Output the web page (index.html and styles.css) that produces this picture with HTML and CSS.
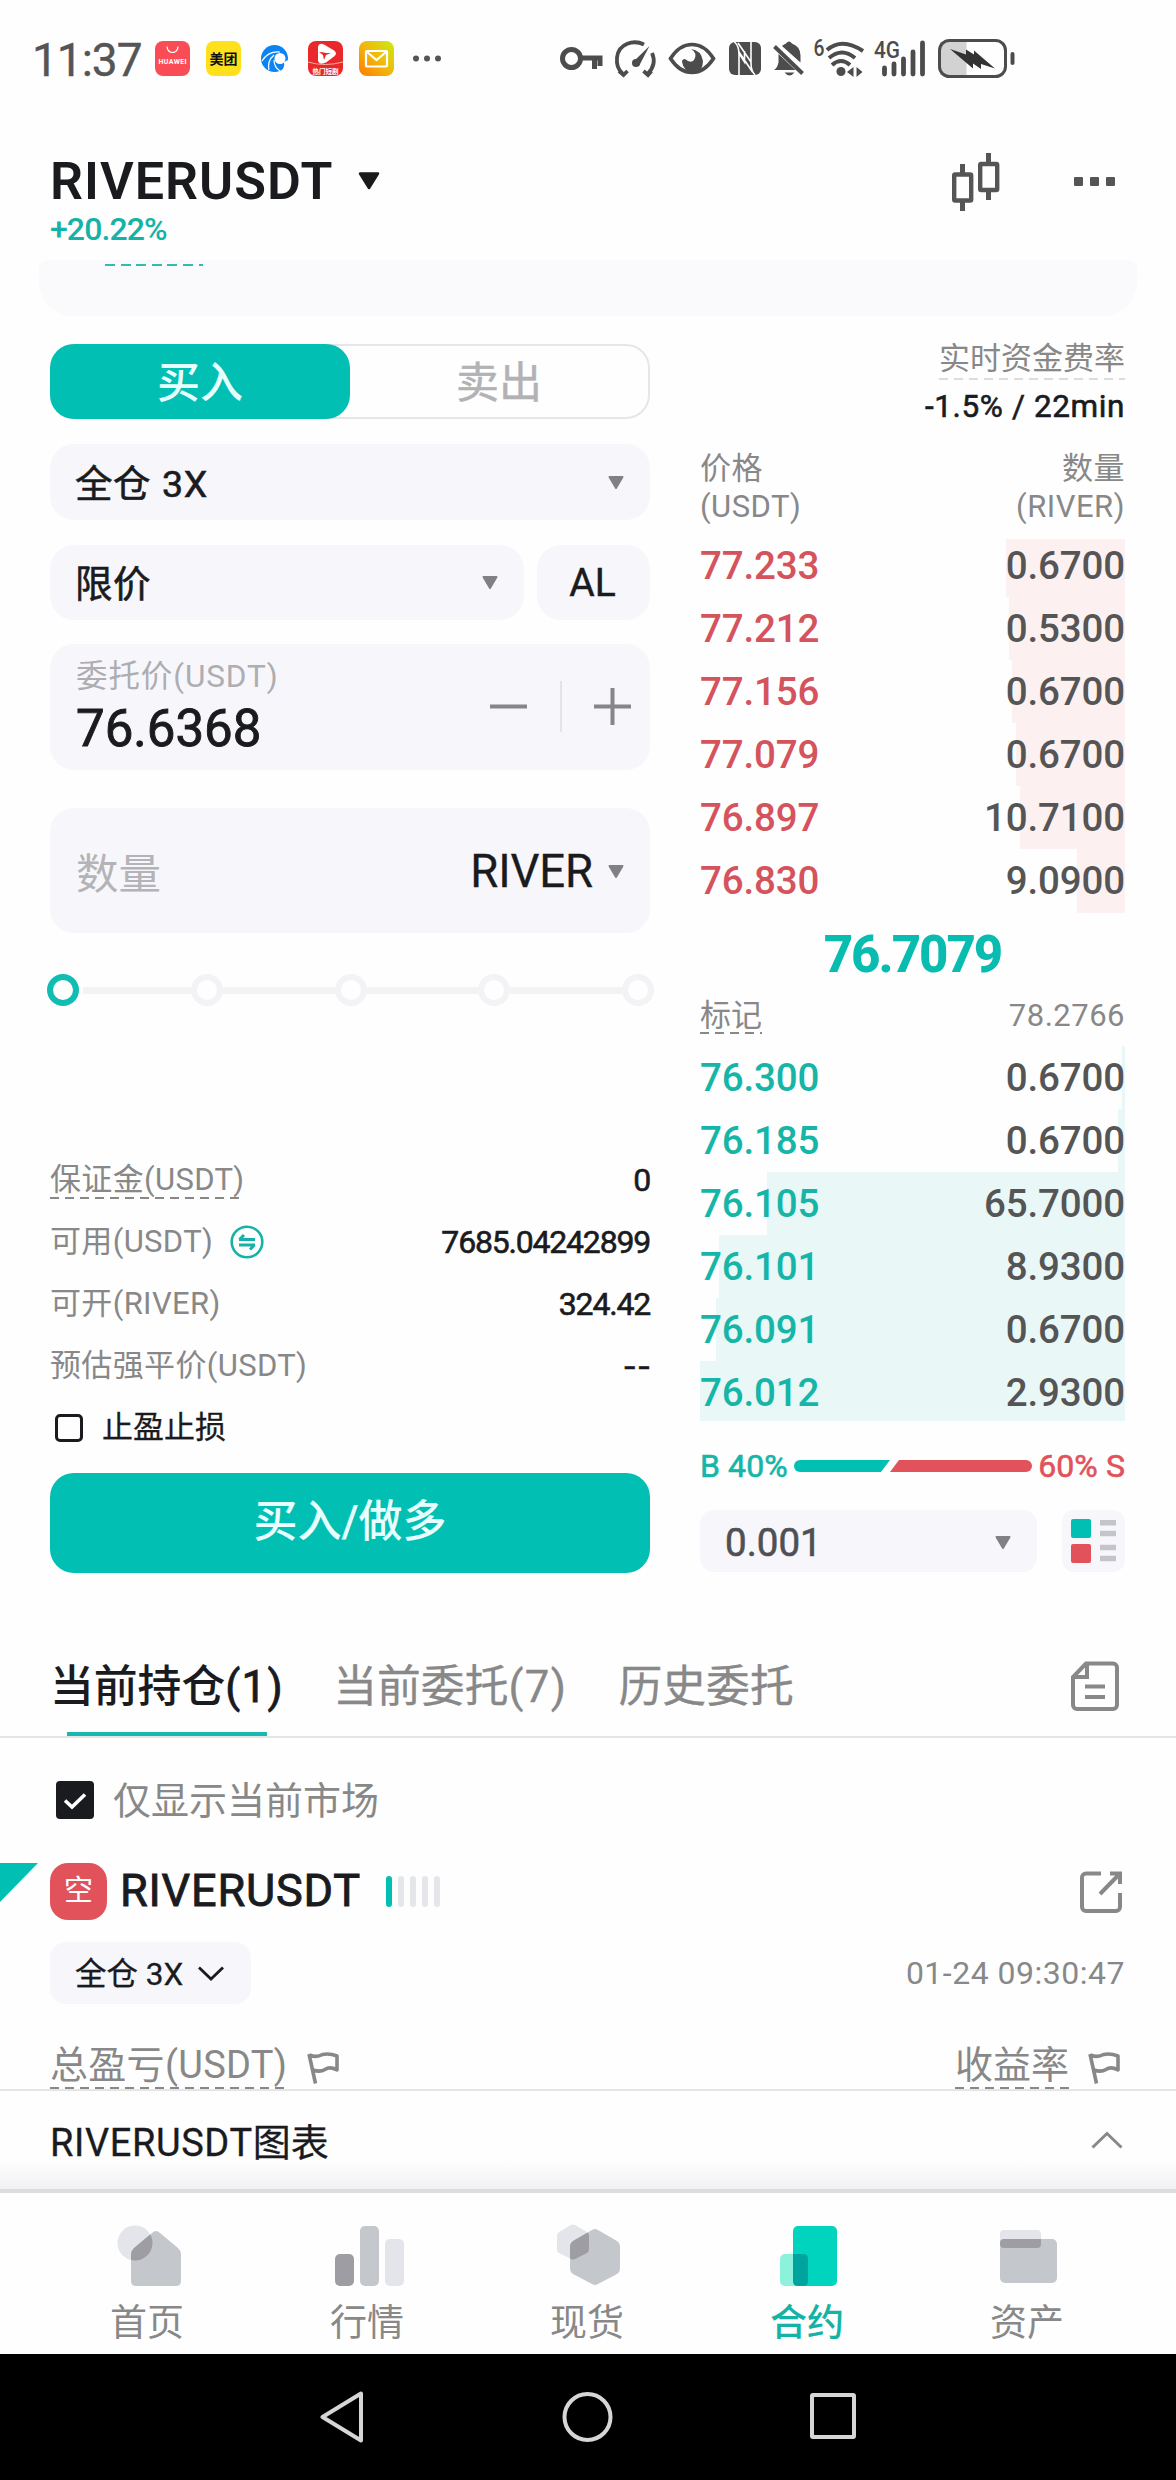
FILE: index.html
```html
<!DOCTYPE html>
<html lang="zh-CN">
<head>
<meta charset="utf-8">
<title>RIVERUSDT</title>
<link rel="stylesheet" href="styles.css">
</head>
<body>
<div class="screen">
  <header class="status">
    <span class="clock">11:37</span>
    <svg class="apps" width="300" height="40" viewBox="152 38 300 40">
      <defs>
        <linearGradient id="mail" x1="0" y1="1" x2="1" y2="0"><stop offset="0" stop-color="#ff7a00"/><stop offset=".5" stop-color="#f2b70c"/><stop offset="1" stop-color="#c8ee10"/></linearGradient>
      </defs>
      <rect x="155" y="41" width="35" height="35" rx="8" fill="#fa4c55"/>
      <path d="M167 46.500a5.500 6 0 0 0 11 0" fill="none" stroke="#fff" stroke-width="1.200"/>
      <text x="172.500" y="63.500" font-size="7" font-weight="700" text-anchor="middle" fill="#fff" textLength="28">HUAWEI</text>
      <rect x="206" y="41" width="35" height="35" rx="8" fill="#fee11a"/>
      <text x="223.500" y="64" font-size="14" font-weight="700" text-anchor="middle" fill="#111">美团</text>
      <g>
        <circle cx="274.500" cy="58.500" r="13.500" fill="#0d83f3"/>
        <circle cx="280" cy="58.500" r="5.500" fill="#fff"/>
        <path d="M280 52q-12-1-18 9M274 55q-7 6-5 15M274 60q0 7 6 11" fill="none" stroke="#fff" stroke-width="1.200"/>
        <path d="M284 62l6-3v5l-7 7-2 1q4-5 3-10z" fill="#fff"/>
      </g>
      <rect x="308" y="41" width="35" height="35" rx="8" fill="#e9282c"/>
      <path d="M318 46.500q1-4 6-2l10 6q4 3 0 6l-8 6q-7 3-8-2z" fill="#fff"/>
      <path d="M319 52q4 0 7 1h5l-5 2-2 5-1-5z" fill="#e9282c"/>
      <path d="M308 62q17 5 35 0" fill="none" stroke="#f7b09a" stroke-width="1"/>
      <text x="325.500" y="73.500" font-size="6.500" font-weight="700" text-anchor="middle" fill="#fff">热门短剧</text>
      <rect x="359" y="41" width="35" height="35" rx="8" fill="url(#mail)"/>
      <rect x="366" y="51" width="21" height="15.500" rx="1" fill="none" stroke="#fff" stroke-width="2.200"/>
      <path d="M367 52l9.500 8 9.500-8" fill="none" stroke="#fff" stroke-width="2.200"/>
      <g fill="#555"><circle cx="416" cy="58.500" r="3"/><circle cx="427" cy="58.500" r="3"/><circle cx="438" cy="58.500" r="3"/></g>
    </svg>
    <svg class="signals" width="460" height="44" viewBox="556 36 460 44" fill="none" stroke="#4c4c4c">
      <circle cx="571.500" cy="58.500" r="9" stroke-width="5"/>
      <path d="M581 58h21.500M594.500 60v9M600 60v6" stroke-width="5"/>
      <path d="M622.500 73.500Q616 68 617 57.500C618.500 43 634 39.500 644 44.500M652 53q5 11-4 20.500M619 71l4.500 4 4-4M651.500 71l-3.500 4-4.500-4" stroke-width="3.800"/>
      <path d="M649.500 46L634 61l1 5h4z" fill="#4c4c4c" stroke="none"/><circle cx="636" cy="63" r="4" fill="#4c4c4c" stroke="none"/>
      <path d="M670.500 58.500q9-14 21.500-14t21.500 14q-9 14-21.500 14t-21.500-14z" stroke-width="3.600"/>
      <path d="M691 49q7 4 3 11-3 4-9-1-3 0-3 3 2 10 11 11 10-1 10-12-2-11-12-12z" fill="#4c4c4c" stroke="none"/>
      <rect x="729" y="42" width="32" height="33" rx="6" fill="#4c4c4c" stroke="none"/>
      <path d="M734.500 42q4.500 4 4.500 12v21M739 52l13.500 20M755 75q-4-4-4-12V42M751 62L738 43M744.500 51v11l-5-8" stroke="#fefefe" stroke-width="1.600"/>
      <path d="M774 70q4-3 4.500-8V54l17 16zM782 46q2-2 4-2.500 3-4 6 0 8.500 3 8.500 12v7z" fill="#4c4c4c" stroke="none"/>
      <path d="M774.500 46.500l28 27" stroke-width="4"/><path d="M784.500 72.500h10q-5 6-10 0z" fill="#4c4c4c" stroke="none"/>
      <text x="813.500" y="56" font-size="24" font-weight="500" fill="#4c4c4c" stroke="none" textLength="11" lengthAdjust="spacingAndGlyphs">6</text>
      <path d="M827 50q15-13 36 1M829 58q13-11 26 0M832 65q9-8 18 0" stroke-width="4"/>
      <circle cx="841" cy="71.500" r="4.500" fill="#4c4c4c" stroke="none"/>
      <path d="M847 72l6.500-5v10zM856.500 67l6 5-6 5z" fill="#4c4c4c" stroke="none"/>
      <text x="874" y="58" font-size="23" font-weight="500" fill="#4c4c4c" stroke="none" textLength="26" lengthAdjust="spacingAndGlyphs">4G</text>
      <path d="M884.500 68v6M894 64v10M903.500 59v15M913 52v22M922.500 43v31" stroke-width="4.800" stroke-linecap="round"/>
      <path d="M940 42h26.500v33H940z" fill="#d2d2d2" stroke="none"/>
      <rect x="939.500" y="40.500" width="66" height="36" rx="10" stroke-width="3"/>
      <path d="M950 49l16 5.500v-5l8 5v-4l21 18-14-4.500v5l-8-5.500v5z" fill="#333" stroke="none"/>
      <path d="M1012.500 54v9" stroke-width="4" stroke-linecap="round"/>
    </svg>
  </header>

  <div class="topbar">
    <div class="symbol">
      <div class="symbol-name">RIVERUSDT
        <svg width="22" height="18" viewBox="0 0 22 18"><path d="M2 1.500h18L11 16z" fill="#191a1b" stroke="#191a1b" stroke-width="2.500" stroke-linejoin="round"/></svg>
      </div>
      <div class="symbol-change">+20.22%</div>
    </div>
    <div class="topbar-actions">
      <svg width="48" height="58" viewBox="0 0 48 58" fill="none" stroke="#555"><path d="M10.500 11v9M10.500 48v10M36.500 0v10M36.500 37v10" stroke-width="5"/><rect x="2.200" y="21.500" width="17" height="26" rx="1" stroke-width="4.400"/><rect x="28.200" y="11" width="17" height="26" rx="1" stroke-width="4.400"/></svg>
      <svg width="42" height="9" viewBox="0 0 42 9" fill="#555"><rect width="9" height="9" rx="1"/><rect x="16" width="9" height="9" rx="1"/><rect x="32" width="9" height="9" rx="1"/></svg>
    </div>
  </div>

  <div class="notice"><i></i></div>

  <main class="trade">
    <section class="form">
      <div class="toggle"><div class="toggle-on">买入</div><div class="toggle-off">卖出</div></div>
      <div class="field select"><span>全仓 3X</span><svg class="caret" viewBox="0 0 16 13"><path d="M1.500 1h13L8 12z"/></svg></div>
      <div class="pair">
        <div class="field select"><span>限价</span><svg class="caret" viewBox="0 0 16 13"><path d="M1.500 1h13L8 12z"/></svg></div>
        <div class="field al">AL</div>
      </div>
      <div class="field price">
        <div><div class="price-label">委托价(USDT)</div><div class="price-value">76.6368</div></div>
        <svg width="144" height="52" viewBox="488 682 144 52" fill="none"><path d="M490 707.500h37M594 707.500h37M612.500 689v37" stroke="#85858a" stroke-width="4"/><path d="M561 682v51" stroke="#e3e3e8" stroke-width="2"/></svg>
      </div>
      <div class="field qty"><span class="qty-hint">数量</span><span class="qty-unit">RIVER<svg class="caret" viewBox="0 0 16 13"><path d="M1.500 1h13L8 12z"/></svg></span></div>
      <div class="slider"><b></b><s></s><i></i><s></s><i></i><s></s><i></i><s></s><i></i></div>
      <dl class="info">
        <div><dt class="dash">保证金(USDT)</dt><dd>0</dd></div>
        <div><dt>可用(USDT)<svg width="34" height="34" viewBox="0 0 34 34" fill="none" stroke="#15b3a7"><circle cx="17" cy="17" r="15.300" stroke-width="2.600"/><path d="M9 14.500h16M14 10l-4.500 4.500M9 20h16M20 24.500l4.500-4.500" stroke-width="3"/></svg></dt><dd>7685.04242899</dd></div>
        <div><dt>可开(RIVER)</dt><dd>324.42</dd></div>
        <div><dt>预估强平价(USDT)</dt><dd class="empty">--</dd></div>
        <div class="tpsl"><dt><i class="box"></i>止盈止损</dt></div>
      </dl>
      <div class="submit">买入/做多</div>
    </section>

    <section class="book">
      <div class="fund-label"><span class="dash">实时资金费率</span></div>
      <div class="fund-rate">-1.5% / 22min</div>
      <div class="book-head"><span>价格<br>(USDT)</span><span>数量<br>(RIVER)</span></div>
      <div class="rows asks">
        <div class="row"><i style="width:119px"></i><span>77.233</span><em>0.6700</em></div>
        <div class="row"><i style="width:116px"></i><span>77.212</span><em>0.5300</em></div>
        <div class="row"><i style="width:113px"></i><span>77.156</span><em>0.6700</em></div>
        <div class="row"><i style="width:109px"></i><span>77.079</span><em>0.6700</em></div>
        <div class="row"><i style="width:105px"></i><span>76.897</span><em>10.7100</em></div>
        <div class="row"><i style="width:48px"></i><span>76.830</span><em>9.0900</em></div>
      </div>
      <div class="last">76.7079</div>
      <div class="mark"><span class="dash">标记</span><span class="mark-value">78.2766</span></div>
      <div class="rows bids">
        <div class="row"><i style="width:3px"></i><span>76.300</span><em>0.6700</em></div>
        <div class="row"><i style="width:7px"></i><span>76.185</span><em>0.6700</em></div>
        <div class="row"><i style="width:358px"></i><span>76.105</span><em>65.7000</em></div>
        <div class="row"><i style="width:406px"></i><span>76.101</span><em>8.9300</em></div>
        <div class="row"><i style="width:409px"></i><span>76.091</span><em>0.6700</em></div>
        <div class="row"><i style="width:425px"></i><span>76.012</span><em>2.9300</em></div>
      </div>
      <div class="ratio"><span>B 40%</span>
        <svg width="238" height="12" viewBox="0 0 238 12"><path d="M6 0h90l-9 12H6A6 6 0 0 1 6 0z" fill="#02bfb3"/><path d="M105 0h127a6 6 0 0 1 0 12H96z" fill="#e1525a"/></svg>
        <span class="ratio-s">60% S</span></div>
      <div class="depth">
        <div class="depth-step">0.001<svg class="caret" viewBox="0 0 16 13"><path d="M1.500 1h13L8 12z"/></svg></div>
        <div class="depth-view"><svg width="46" height="44" viewBox="0 0 46 44"><rect x="0" y="0" width="20" height="19" rx="2" fill="#02bfb3"/><rect x="0" y="25" width="20" height="19" rx="2" fill="#e1525a"/><path d="M29 3.800h16M29 14.500h16M29 28.500h16M29 39.500h16" stroke="#c4c4cb" stroke-width="5.600"/></svg></div>
      </div>
    </section>
  </main>

  <nav class="tabs">
    <span class="tab tab-on">当前持仓<em>(1)</em></span><span class="tab">当前委托<em>(7)</em></span><span class="tab">历史委托</span>
    <svg class="tabs-doc" width="48" height="51" viewBox="0 0 48 51" fill="none" stroke="#888" stroke-width="4"><path d="M15 2.500h27a4 4 0 0 1 4 4V44a4 4 0 0 1-4 4H6a4 4 0 0 1-4-4V16zM16 3v13H3M14 25.500h20M14 36h20"/></svg>
  </nav>

  <section class="position">
    <div class="only"><svg width="38" height="38" viewBox="0 0 38 38"><rect width="38" height="38" rx="4" fill="#1a1b1e"/><path d="M9 19.500l7 6.500 13-12.500" fill="none" stroke="#fff" stroke-width="3.600"/></svg><span>仅显示当前市场</span></div>
    <div class="pos-head">
      <i class="corner"></i>
      <span class="side">空</span><span class="pos-name">RIVERUSDT</span>
      <span class="level"><i></i><i></i><i></i><i></i><i></i></span>
      <svg class="share" width="42" height="42" viewBox="0 0 42 42" fill="none" stroke="#888" stroke-width="4"><path d="M21 2.500H6a4 4 0 0 0-4 4V36a4 4 0 0 0 4 4h30a4 4 0 0 0 4-4V22M30 2.500h10V13M39 3.500L20 23"/></svg>
    </div>
    <div class="pos-sub"><span class="chip"><span>全仓 3X</span><svg width="26" height="15" viewBox="0 0 26 15" fill="none" stroke="#1a1b1e" stroke-width="2.800"><path d="M1 1.500l12 11.500 12-11.500"/></svg></span><span class="time">01-24 09:30:47</span></div>
    <div class="pos-pnl">
      <span class="pnl"><span class="dash">总盈亏(USDT)</span><svg class="flag" viewBox="0 0 32 34"><path d="M2 3l6.500 29.500M2.500 4q7 3 13-.500 7-1.500 14.500 1.500v14q-7-4-12-.500-5 3-12 .500"/></svg></span>
      <span class="pnl"><span class="dash">收益率</span><svg class="flag" viewBox="0 0 32 34"><path d="M2 3l6.500 29.500M2.500 4q7 3 13-.500 7-1.500 14.500 1.500v14q-7-4-12-.500-5 3-12 .500"/></svg></span>
    </div>
  </section>

  <div class="chart"><span><em>RIVERUSDT</em>图表</span><svg width="32" height="18" viewBox="0 0 32 18" fill="none" stroke="#888" stroke-width="3"><path d="M1.500 16.500L16 2.500l14.500 14"/></svg></div>

  <nav class="bottom">
    <div class="item"><svg width="64" height="64" viewBox="116 2223 64 64"><defs><clipPath id="house"><path d="M155 2231q2 0 4 2l18 15q3 3 3 6v27q0 5-5 5h-40q-5 0-5-5v-27q0-3 3-6l18-15q2-2 4-2z"/></clipPath></defs><circle cx="134" cy="2243" r="17.500" fill="#e3e5eb"/><path d="M155 2231q2 0 4 2l18 15q3 3 3 6v27q0 5-5 5h-40q-5 0-5-5v-27q0-3 3-6l18-15q2-2 4-2z" fill="#c4c7cc"/><circle cx="134" cy="2243" r="17.500" fill="#9d9da3" clip-path="url(#house)"/></svg>首页</div>
    <div class="item"><svg width="70" height="64" viewBox="333 2223 70 64"><rect x="334" y="2254" width="19" height="32" rx="5" fill="#9d9da3"/><rect x="359" y="2226" width="19" height="60" rx="5" fill="#c4c7cc"/><rect x="384" y="2239" width="19" height="47" rx="5" fill="#e3e5eb"/></svg>行情</div>
    <div class="item"><svg width="64" height="64" viewBox="557 2223 64 64"><defs><clipPath id="cube"><path d="M592 2230q3-2 6 0l19 11q3 2 3 5v23q0 3-3 5l-19 10q-3 2-6 0l-19-10q-3-2-3-5v-23q0-3 3-5z"/></clipPath></defs><path d="M571 2225q2-1 4 0l12 7q2 1 2 4v13q0 3-2 4l-12 6q-2 1-4 0l-12-6q-2-1-2-4v-13q0-3 2-4z" fill="#e3e5eb"/><path d="M592 2230q3-2 6 0l19 11q3 2 3 5v23q0 3-3 5l-19 10q-3 2-6 0l-19-10q-3-2-3-5v-23q0-3 3-5z" fill="#c4c7cc"/><path clip-path="url(#cube)" d="M571 2225q2-1 4 0l12 7q2 1 2 4v13q0 3-2 4l-12 6q-2 1-4 0l-12-6q-2-1-2-4v-13q0-3 2-4z" fill="#9d9da3"/></svg>现货</div>
    <div class="item item-on"><svg width="58" height="64" viewBox="780 2223 58 64"><rect x="780" y="2254" width="28" height="32" rx="5" fill="#8df2dc"/><rect x="793" y="2226" width="44" height="60" rx="5" fill="#00d4bf"/><path d="M793 2254h10q5 0 5 5v22q0 5-5 5h-5q-5 0-5-5z" fill="#00a39d"/></svg>合约</div>
    <div class="item"><svg width="58" height="64" viewBox="1000 2223 58 64"><rect x="1000" y="2230" width="41" height="18" rx="4" fill="#e3e5eb"/><rect x="1000" y="2239" width="57" height="44" rx="5" fill="#c4c7cc"/><path d="M1004 2239h37v5q0 4-4 4h-33q-4 0-4-4v-1q0-4 4-4z" fill="#9d9da3"/></svg>资产</div>
  </nav>

  <footer class="system">
    <svg width="44" height="52" viewBox="0 0 44 52"><path d="M41 2.500v47L2.500 26z"/></svg>
    <svg width="52" height="52" viewBox="0 0 52 52"><circle cx="26.500" cy="26" r="23"/></svg>
    <svg width="46" height="52" viewBox="0 0 46 52"><rect x="2" y="4" width="42" height="42" rx="1"/></svg>
  </footer>
</div>
</body>
</html>
```

FILE: styles.css
```css
* { box-sizing: border-box; }
body { margin: 0; background: #fefefe; }
svg { display: block; flex: none; }
i, em { font-style: normal; }
dl, dd { margin: 0; }
.screen {
  width: 1176px; height: 2480px; overflow: hidden;
  display: flex; flex-direction: column;
  font-family: Roboto, "Noto Sans CJK SC", sans-serif;
  color: #1a1b1e; white-space: nowrap;
}

/* status bar */
.status { height: 118px; flex: none; display: flex; padding-left: 32px; }
.clock { width: 120px; font-size: 46px; line-height: 120px; letter-spacing: -1px; color: #555; -webkit-text-stroke: .4px; }
.apps { margin-top: 38px; }
.signals { margin: 36px 0 0 104px; }

/* symbol header */
.topbar { height: 142px; flex: none; display: flex; justify-content: space-between; padding: 0 60px 0 50px; }
.symbol-name { display: flex; align-items: center; gap: 25px; height: 64px; margin-top: 31px; font-size: 52px; font-weight: 600; letter-spacing: 1px; }
.symbol-change { font-size: 32px; line-height: 32px; color: #15b3a7; font-weight: 500; letter-spacing: -.9px; }
.topbar-actions { display: flex; align-items: center; gap: 74px; height: 127px; }

.notice { flex: none; height: 56px; margin: 0 39px; background: #fafafc; border-radius: 8px 8px 34px 34px; padding: 4px 0 0 66px; }
.notice i { display: block; width: 98px; height: 2px; background: repeating-linear-gradient(90deg, #2fbcb1 0 10px, transparent 10px 15.600px); }

/* trade area */
.trade { flex: none; display: flex; justify-content: space-between; height: 1256px; padding: 28px 51px 0 50px; }
.form { width: 600px; }
.toggle { display: flex; height: 75px; border: 2px solid #e6e6e8; border-radius: 24px; font-size: 43px; text-align: center; }
.toggle-on { width: 300px; margin: -2px 0 -2px -2px; line-height: 78px; border-radius: 24px; background: #02bfb3; color: #e8ffff; font-weight: 500; }
.toggle-off { flex: 1; color: #b2b2b4; line-height: 74px; -webkit-text-stroke: .5px; }
.field { display: flex; align-items: center; justify-content: space-between; height: 76px; margin-top: 25px; padding: 0 26px; border-radius: 24px; background: #f7f7fb; font-size: 37.500px; }
.select span { margin: -4px 0 0 -1px; letter-spacing: .6px; word-spacing: 1px; -webkit-text-stroke: .6px; }
.caret { width: 16px; height: 13px; fill: #808085; stroke: #808085; stroke-width: 2; stroke-linejoin: round; }
.pair { display: flex; justify-content: space-between; margin-top: 25px; }
.pair .field { margin: 0; width: 474px; height: 75px; }
.pair .al { width: 113px; padding: 0 2px 0 0; justify-content: center; font-size: 39px; -webkit-text-stroke: .5px; }
.price { height: 126px; margin-top: 24px; padding-right: 18px; }
.price-label { font-size: 31.500px; line-height: 40px; color: #adadb2; letter-spacing: .9px; margin-top: 3px; }
.price-value { font-size: 51px; line-height: 64px; letter-spacing: 0; -webkit-text-stroke: .9px; }
.qty { height: 125px; margin-top: 38px; font-size: 45.500px; }
.qty-hint { font-size: 42.500px; color: #b4b4b8; }
.qty-unit { display: flex; align-items: center; gap: 15px; margin-top: 2px; letter-spacing: -.1px; -webkit-text-stroke: .3px; }
.slider { display: flex; align-items: center; margin: 41px -4px 0 -3px; height: 32px; }
.slider b, .slider i { width: 32px; height: 32px; border-radius: 50%; border: 6px solid #f3f3f6; flex: none; }
.slider b { border-color: #10bdb0; }
.slider s { flex: 1; height: 7px; background: #f3f3f6; }
.slider b + s { background: linear-gradient(90deg, transparent 4px, #f3f3f6 4px); }
.info { margin-top: 143px; }
.info > div { height: 62px; display: flex; align-items: center; justify-content: space-between; }
.info dt { font-size: 31px; line-height: 38px; color: #888; letter-spacing: .35px; display: flex; align-items: center; gap: 17px; }
.info dd { font-size: 32px; letter-spacing: -1.200px; -webkit-text-stroke: .6px; }
.info .empty { transform: scaleX(1.250); transform-origin: right; letter-spacing: 2.500px; margin-right: -3px; }
.info .tpsl dt { color: #1a1b1e; gap: 19px; padding-left: 5px; letter-spacing: 0; -webkit-text-stroke: .3px; }
.box { width: 28px; height: 28px; border: 3px solid #1a1b1e; border-radius: 5px; }
.dash { --dash: #888; position: relative; }
.dash::after { content: ""; position: absolute; left: 0; right: 0; bottom: 0; height: 2px; background: repeating-linear-gradient(90deg, var(--dash) 0 9px, transparent 9px 15px); }
.submit { margin-top: 14px; height: 100px; line-height: 99px; border-radius: 24px; background: #02bfb3; color: #e8ffff; font-size: 44px; font-weight: 500; text-align: center; }

/* order book */
.book { width: 425px; }
.fund-label { font-size: 31px; line-height: 30px; height: 36px; text-align: right; color: #888; }
.fund-label .dash { display: inline-block; height: 36px; --dash: #dcdcdc; }
.fund-rate { margin-top: 8px; font-size: 31.500px; line-height: 38px; text-align: right; letter-spacing: .6px; -webkit-text-stroke: .6px; }
.book-head { margin-top: 24px; display: flex; justify-content: space-between; font-size: 31px; line-height: 38px; color: #888; letter-spacing: .5px; }
.book-head span + span { text-align: right; }
.rows { margin-top: 8px; }
.row { position: relative; display: flex; justify-content: space-between; height: 63.100px; line-height: 63px; font-size: 38.500px; font-weight: 500; letter-spacing: -.15px; color: #555; }
.row i { position: absolute; right: 0; top: 0; bottom: 0; }
.row span, .row em { position: relative; }
.asks i { background: #fdf0f0; }
.asks .row:first-child i { top: 5px; }
.asks span { color: #d4535c; }
.bids i { background: #e9f7f7; }
.bids .row:last-child i { bottom: 3px; }
.bids span { color: #15b5a8; }
.last { height: 82px; line-height: 84px; text-align: center; font-size: 51px; font-weight: 800; letter-spacing: -2px; color: #08bcb0; }
.mark { display: flex; justify-content: space-between; margin-top: 1px; height: 38px; line-height: 39px; font-size: 31px; color: #888; }
.mark-value { letter-spacing: .5px; }
.mark + .rows { margin-top: 12px; }
.ratio { display: flex; align-items: center; justify-content: space-between; margin-top: 23px; height: 38px; font-size: 32px; color: #15b5a8; letter-spacing: .1px; -webkit-text-stroke: .6px; }
.ratio-s { color: #e1525a; }
.depth { display: flex; justify-content: space-between; margin-top: 25px; height: 62px; }
.depth-step { width: 337px; display: flex; align-items: center; justify-content: space-between; padding: 2px 26px 0 25px; border-radius: 14px; background: #f7f7fb; font-size: 38.500px; color: #505054; -webkit-text-stroke: .6px; }
.depth-view { width: 63px; display: flex; align-items: center; justify-content: center; border-radius: 12px; background: #f7f7fb; }

/* tabs */
.tabs { flex: none; height: 166px; padding: 92px 57px 0 51px; border-bottom: 2px solid #e5e5e6; display: flex; gap: 51px; font-size: 43.800px; }
.tab { position: relative; line-height: 47px; height: 72px; color: #888; -webkit-text-stroke: .3px; }
.tab em { letter-spacing: 1.400px; }
.tab-on { color: #1a1b1e; font-weight: 500; margin: 0 -2px 0 -1px; -webkit-text-stroke: 0; }
.tab-on::after { content: ""; position: absolute; left: 17px; width: 200px; bottom: 0; height: 4px; background: #15b9ae; }
.tab-on em { font-weight: 400; -webkit-text-stroke: .8px; }
.tabs-doc { margin: -3px 0 0 auto; }

/* position card */
.position { flex: none; height: 351px; }
.only { display: flex; align-items: center; gap: 19px; height: 58px; margin-top: 33px; padding-left: 56px; font-size: 38px; color: #888; }
.only span { margin-top: -5px; }
.pos-head { position: relative; display: flex; align-items: center; height: 57px; margin-top: 34px; padding: 0 54px 0 50px; }
.corner { position: absolute; left: 0; top: 0; width: 38px; height: 39px; background: #02bfb3; clip-path: polygon(0 0, 100% 0, 0 100%); }
.side { width: 57px; height: 57px; line-height: 57px; border-radius: 18px; background: #e1525a; color: #fff; font-size: 29px; text-align: center; }
.pos-name { margin-left: 13px; font-size: 45px; line-height: 54px; margin-top: -2px; letter-spacing: .8px; width: 266px; -webkit-text-stroke: .9px; }
.level { display: flex; gap: 6px; }
.level i { width: 6px; height: 31px; border-radius: 3px; background: #e5e6e9; }
.level i:first-child { background: #02bfb3; }
.share { margin-left: auto; margin-top: 1px; }
.pos-sub { display: flex; align-items: center; justify-content: space-between; height: 62px; margin-top: 22px; padding: 0 51px 0 50px; }
.chip { display: flex; align-items: center; gap: 15px; width: 201px; height: 62px; padding-left: 25px; border-radius: 16px; background: #f7f7fb; font-size: 31.500px; -webkit-text-stroke: .3px; }
.chip span { margin-top: -4px; }
.time { font-size: 32px; color: #888; letter-spacing: .5px; }
.pos-pnl { display: flex; justify-content: space-between; height: 50px; margin-top: 36px; padding: 0 56px 0 50px; }
.pnl { display: flex; align-items: center; gap: 20px; font-size: 38px; line-height: 46px; color: #888; }
.pnl + .pnl { gap: 19px; }
.pnl .dash { height: 47px; letter-spacing: .3px; }
.pnl + .pnl .dash { letter-spacing: 0; }
.flag { width: 32px; height: 34px; fill: none; stroke: #888; stroke-width: 3.600; stroke-linejoin: round; margin-top: 5px; }

.chart { flex: none; height: 104px; display: flex; align-items: center; justify-content: space-between; padding: 0 53px 0 50px; border-top: 2px solid #e5e5e6; border-bottom: 4px solid #dcdce0; font-size: 38px; background: linear-gradient(#fefefe 70%, #f1f1f4); -webkit-text-stroke: .3px; }
.chart span { margin-top: -2px; }
.chart em { letter-spacing: .6px; }

/* bottom navigation */
.bottom { flex: none; display: flex; height: 161px; padding: 30px 37px 0; }
.item { width: 220px; display: flex; flex-direction: column; align-items: center; font-size: 37px; line-height: 54px; gap: 10px; color: #888; }
.item svg { margin-left: 3px; }
.item-on { color: #15b3a7; font-weight: 500; }
.system { flex: none; height: 126px; display: flex; background: #000; padding: 37px 320px 0; justify-content: space-between; }
.system svg { fill: none; stroke: #d6d6d6; stroke-width: 4; stroke-linejoin: round; }
```
